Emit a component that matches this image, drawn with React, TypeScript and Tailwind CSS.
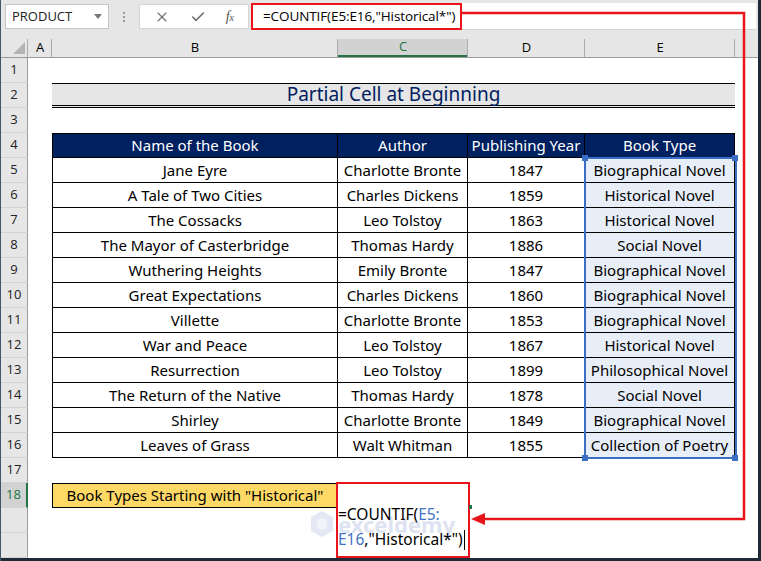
import { X, Check } from 'lucide-react';

const books = [
  ['Jane Eyre', 'Charlotte Bronte', '1847', 'Biographical Novel'],
  ['A Tale of Two Cities', 'Charles Dickens', '1859', 'Historical Novel'],
  ['The Cossacks', 'Leo Tolstoy', '1863', 'Historical Novel'],
  ['The Mayor of Casterbridge', 'Thomas Hardy', '1886', 'Social Novel'],
  ['Wuthering Heights', 'Emily Bronte', '1847', 'Biographical Novel'],
  ['Great Expectations', 'Charles Dickens', '1860', 'Biographical Novel'],
  ['Villette', 'Charlotte Bronte', '1853', 'Biographical Novel'],
  ['War and Peace', 'Leo Tolstoy', '1867', 'Historical Novel'],
  ['Resurrection', 'Leo Tolstoy', '1899', 'Philosophical Novel'],
  ['The Return of the Native', 'Thomas Hardy', '1878', 'Social Novel'],
  ['Shirley', 'Charlotte Bronte', '1849', 'Biographical Novel'],
  ['Leaves of Grass', 'Walt Whitman', '1855', 'Collection of Poetry'],
];

const cell = "font-['Noto_Sans',sans-serif] text-[15px] text-black";

function RowHead({ n, active = false }: { n?: number; active?: boolean }) {
  return (
    <div
      className={`w-[27px] shrink-0 h-full flex items-center justify-center border-b border-[#d4d4d4] text-[13px] font-['Open_Sans',sans-serif] ${
        active
          ? 'bg-[#d2d2d2] border-r-2 border-r-[#217346] text-[#217346]'
          : 'bg-[#e6e6e6] border-r border-r-[#9b9b9b] text-[#222]'
      }`}
    >
      {n}
    </div>
  );
}

function Row({ n, children, active }: { n?: number; children?: React.ReactNode; active?: boolean }) {
  return (
    <div className="flex h-[25px]">
      <RowHead n={n} active={active} />
      <div className="w-[24px] shrink-0" />
      {children}
    </div>
  );
}

function ColHead({ label, w, active = false }: { label: string; w: string; active?: boolean }) {
  return (
    <div className={`${w} shrink-0 h-full relative flex items-end`}>
      <div
        className={`w-full h-[18px] flex items-center justify-center text-[13px] font-['Open_Sans',sans-serif] ${
          active ? 'bg-[#d2d2d2] border-b-2 border-[#217346] text-[#217346]' : 'text-black'
        }`}
      >
        {label}
      </div>
      <div className="absolute right-0 bottom-0 h-[18px] w-px bg-[#ababab]" />
    </div>
  );
}

export default function App() {
  return (
    <div className="w-[761px] h-[561px] relative overflow-hidden bg-white border-l border-[#44546a]">
      {/* formula bar */}
      <div className="h-[37px] bg-[#e6e6e6] flex items-start pt-[4px]">
        <div className="ml-[4px] w-[104px] h-[25px] bg-white border border-[#c6c6c6] flex items-center pl-[6px] pr-[6px] justify-between">
          <span className="text-[13px] font-['Open_Sans',sans-serif] text-[#222]">PRODUCT</span>
          <span className="w-0 h-0 border-l-[4px] border-r-[4px] border-t-[5px] border-l-transparent border-r-transparent border-t-[#777]" />
        </div>
        <div className="w-[30px] h-[25px] flex flex-col items-center justify-center gap-[2px]">
          <span className="w-[2px] h-[2px] bg-[#999]" />
          <span className="w-[2px] h-[2px] bg-[#999]" />
          <span className="w-[2px] h-[2px] bg-[#999]" />
        </div>
        <div className="w-[110px] h-[25px] bg-white border border-[#d4d4d4] flex items-center justify-around px-[4px]">
          <X size={16} color="#707070" strokeWidth={1.6} />
          <Check size={16} color="#707070" strokeWidth={2.4} />
          <span className="text-[14px] italic font-['Liberation_Serif',serif] text-[#555]">
            f<span className="text-[10px]">x</span>
          </span>
        </div>
        <div className="ml-[2px] w-[505px] h-[27px] -mt-[1px] bg-white border-b border-[#d4d4d4] flex items-center">
          <div className="h-[27px] w-[211px] border-2 border-[#e8141b] flex items-center pl-[10px] text-[13.5px] tracking-[-0.1px] font-['Open_Sans',sans-serif] text-black whitespace-nowrap">
            =COUNTIF(E5:E16,"Historical*")
          </div>
        </div>
      </div>

      {/* column headers */}
      <div className="h-[21px] flex bg-[#e6e6e6] border-b border-[#9b9b9b]">
        <div className="w-[27px] shrink-0 h-full relative">
          <svg className="absolute right-[3px] bottom-[3px]" width="12" height="12" viewBox="0 0 12 12">
            <polygon points="12,0 12,12 0,12" fill="#b4b4b4" />
          </svg>
          <div className="absolute right-0 bottom-0 h-[18px] w-px bg-[#ababab]" />
        </div>
        <ColHead label="A" w="w-[24px]" />
        <ColHead label="B" w="w-[286px]" />
        <ColHead label="C" w="w-[130px]" active />
        <ColHead label="D" w="w-[117px]" />
        <ColHead label="E" w="w-[150px]" />
        <div className="flex-1" />
      </div>

      {/* sheet */}
      <Row n={1} />
      <Row n={2}>
        <div className="w-[683px] shrink-0 h-full bg-[#e7e6e6] border-t border-black border-b-[3px] border-double flex items-center justify-center text-[19px] text-[#002060] font-['Noto_Sans',sans-serif] leading-none">
          Partial Cell at Beginning
        </div>
      </Row>
      <Row n={3} />
      <Row n={4}>
        {['Name of the Book', 'Author', 'Publishing Year', 'Book Type'].map((h, i) => (
          <div
            key={h}
            className={`${['w-[286px]', 'w-[130px]', 'w-[117px]', 'w-[150px]'][i]} shrink-0 h-full bg-[#002060] text-white border-t border-b border-r border-black ${
              i === 0 ? 'border-l' : ''
            } flex items-center justify-center font-['Noto_Sans',sans-serif] text-[15px]`}
          >
            {h}
          </div>
        ))}
      </Row>
      {books.map((b, r) => (
        <Row key={r} n={r + 5}>
          <div className={`w-[286px] shrink-0 h-full border-l border-r border-b border-black flex items-center justify-center ${cell}`}>{b[0]}</div>
          <div className={`w-[130px] shrink-0 h-full border-r border-b border-black flex items-center justify-center ${cell}`}>{b[1]}</div>
          <div className={`w-[117px] shrink-0 h-full border-r border-b border-black flex items-center justify-center ${cell}`}>{b[2]}</div>
          <div className={`w-[150px] shrink-0 h-full bg-[#e8eef8] border-r border-b border-black flex items-center justify-center whitespace-nowrap ${cell}`}>{b[3]}</div>
        </Row>
      ))}
      <Row n={17} />
      <Row n={18} active>
        <div className={`w-[286px] shrink-0 h-full bg-[#ffd966] border border-black flex items-center justify-center ${cell}`}>
          Book Types Starting with "Historical"
        </div>
      </Row>
      <Row />
      <Row />

      {/* selection E5:E16 */}
      <div className="absolute left-[583px] top-[157px] w-[153px] h-[302px] border-2 border-[#3a6fc4]" />
      <div className="absolute left-[581px] top-[155px] w-[6px] h-[6px] bg-[#3a6fc4]" />
      <div className="absolute left-[731px] top-[155px] w-[6px] h-[6px] bg-[#3a6fc4]" />
      <div className="absolute left-[581px] top-[455px] w-[6px] h-[6px] bg-[#3a6fc4]" />
      <div className="absolute left-[731px] top-[455px] w-[6px] h-[6px] bg-[#3a6fc4]" />

      {/* watermark */}
      <div className="absolute left-[309px] top-[510px] flex items-center gap-[4px] opacity-50">
        <svg width="24" height="28" viewBox="0 0 24 28">
          <polygon points="12,1 23,7 23,21 12,27 1,21 1,7" fill="#c9d3ea" />
          <polygon points="12,8 17,11 17,17 12,20 7,17 7,11" fill="#e6ebf6" />
        </svg>
        <span className="text-[22px] font-bold font-['Noto_Sans',sans-serif] text-[#bcc8e4] leading-none">exceldemy</span>
      </div>

      {/* in-cell editor C18 */}
      <div className="absolute left-[335px] top-[482px] w-[134px] h-[76px] border-2 border-[#e8141b] flex flex-col justify-end pb-[4px] font-['Noto_Sans',sans-serif] text-[15.5px] leading-[25px] whitespace-nowrap">
        <div>
          <span className="text-black">=COUNTIF(</span>
          <span className="text-[#4472c4]">E5:</span>
        </div>
        <div className="flex items-center">
          <span className="text-[#4472c4]">E16</span>
          <span className="text-black">,"Historical*")</span>
          <span className="w-px h-[20px] bg-black ml-[1px]" />
        </div>
      </div>
      <div className="absolute left-[468px] top-[505px] w-[3px] h-[4px] bg-[#217346]" />

      {/* red annotation arrow */}
      <svg className="absolute left-0 top-0 pointer-events-none" width="761" height="561">
        <polyline points="461,13 743,13 743,519 482,519" fill="none" stroke="#e8141b" strokeWidth="2.5" />
        <polygon points="470,519 484,513 484,525" fill="#e8141b" />
      </svg>

      {/* window frame */}
      <div className="absolute right-0 top-0 w-[3px] h-full bg-[#1f2a38]" />
      <div className="absolute left-0 bottom-0 w-full h-[3px] bg-[#1f2a38]" />
    </div>
  );
}
